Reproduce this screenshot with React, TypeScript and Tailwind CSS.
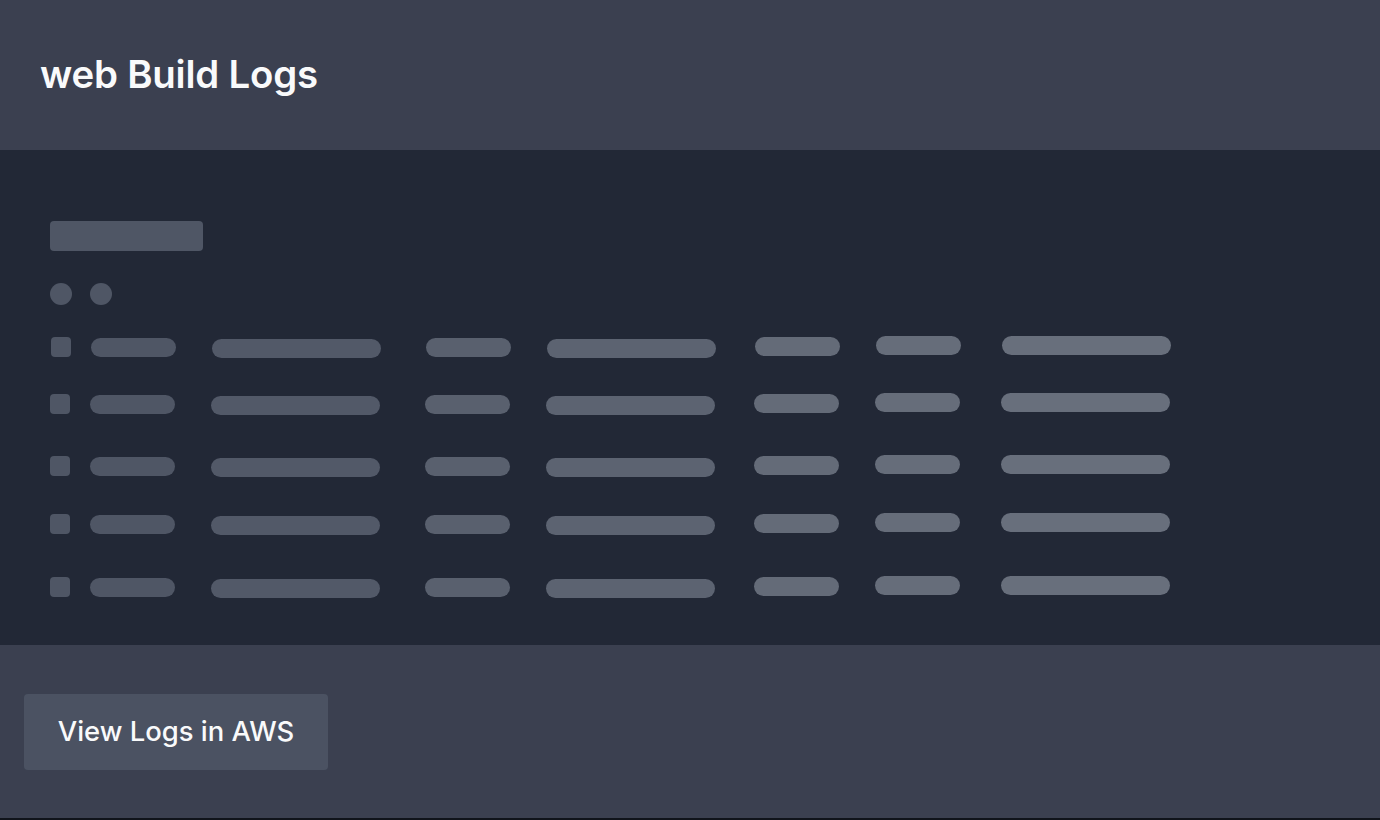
import React from 'react';

type Bar = { w: number; ml: number; dy: number; color: string };

const columns: Bar[] = [
  { w: 85, ml: 20, dy: 1, color: 'bg-[#4f5665]' },
  { w: 169, ml: 36, dy: 2, color: 'bg-[#525968]' },
  { w: 85, ml: 45, dy: 1, color: 'bg-[#59606e]' },
  { w: 169, ml: 36, dy: 2, color: 'bg-[#5c6371]' },
  { w: 85, ml: 39, dy: 0, color: 'bg-[#646b78]' },
  { w: 85, ml: 36, dy: -1, color: 'bg-[#666d7a]' },
  { w: 169, ml: 41, dy: -1, color: 'bg-[#686f7c]' },
];

// gap above each row, from the previous row's top
const rows = [
  { mt: 'mt-[32px]', shift: 'ml-[1px]' },
  { mt: 'mt-[37px]', shift: '' },
  { mt: 'mt-[42px]', shift: '' },
  { mt: 'mt-[38px]', shift: '' },
  { mt: 'mt-[43px]', shift: '' },
];

function SkeletonRow({ className }: { className: string }) {
  return (
    <div className={`flex items-start h-[20px] ${className}`}>
      <div className="w-[20px] h-[20px] rounded-[4px] bg-[#4f5665] shrink-0" />
      {columns.map((c, i) => (
        <div
          key={i}
          className={`h-[19px] rounded-full shrink-0 ${c.color}`}
          style={{ width: c.w, marginLeft: c.ml, transform: `translateY(${c.dy}px)` }}
        />
      ))}
    </div>
  );
}

export default function App() {
  return (
    <div className="w-[1380px] h-[820px] bg-[#10141b] font-['Inter','Liberation_Sans',sans-serif]">
      <div className="h-[150px] bg-[#3b4050] flex items-center px-[40px]">
        <h1 className="text-[38.4px] font-semibold text-[#f9fafb] tracking-[-0.2px] leading-none pb-[1px]">
          web Build Logs
        </h1>
      </div>

      <div className="h-[495px] bg-[#222836] pt-[71px] px-[50px]">
        <div className="w-[153px] h-[30px] rounded-[4px] bg-[#4f5665]" />
        <div className="flex gap-[18px] mt-[32px]">
          <div className="w-[22px] h-[22px] rounded-full bg-[#4f5665]" />
          <div className="w-[22px] h-[22px] rounded-full bg-[#4f5665]" />
        </div>
        {rows.map((r, i) => (
          <SkeletonRow key={i} className={`${r.mt} ${r.shift}`} />
        ))}
      </div>

      <div className="h-[173px] bg-[#3b4050] pt-[49px] px-[24px]">
        <button className="w-[304px] h-[76px] rounded-[4px] bg-[#4b5262] text-[#f9fafb] text-[27.4px] font-medium flex items-center justify-center">
          View Logs in AWS
        </button>
      </div>
    </div>
  );
}
